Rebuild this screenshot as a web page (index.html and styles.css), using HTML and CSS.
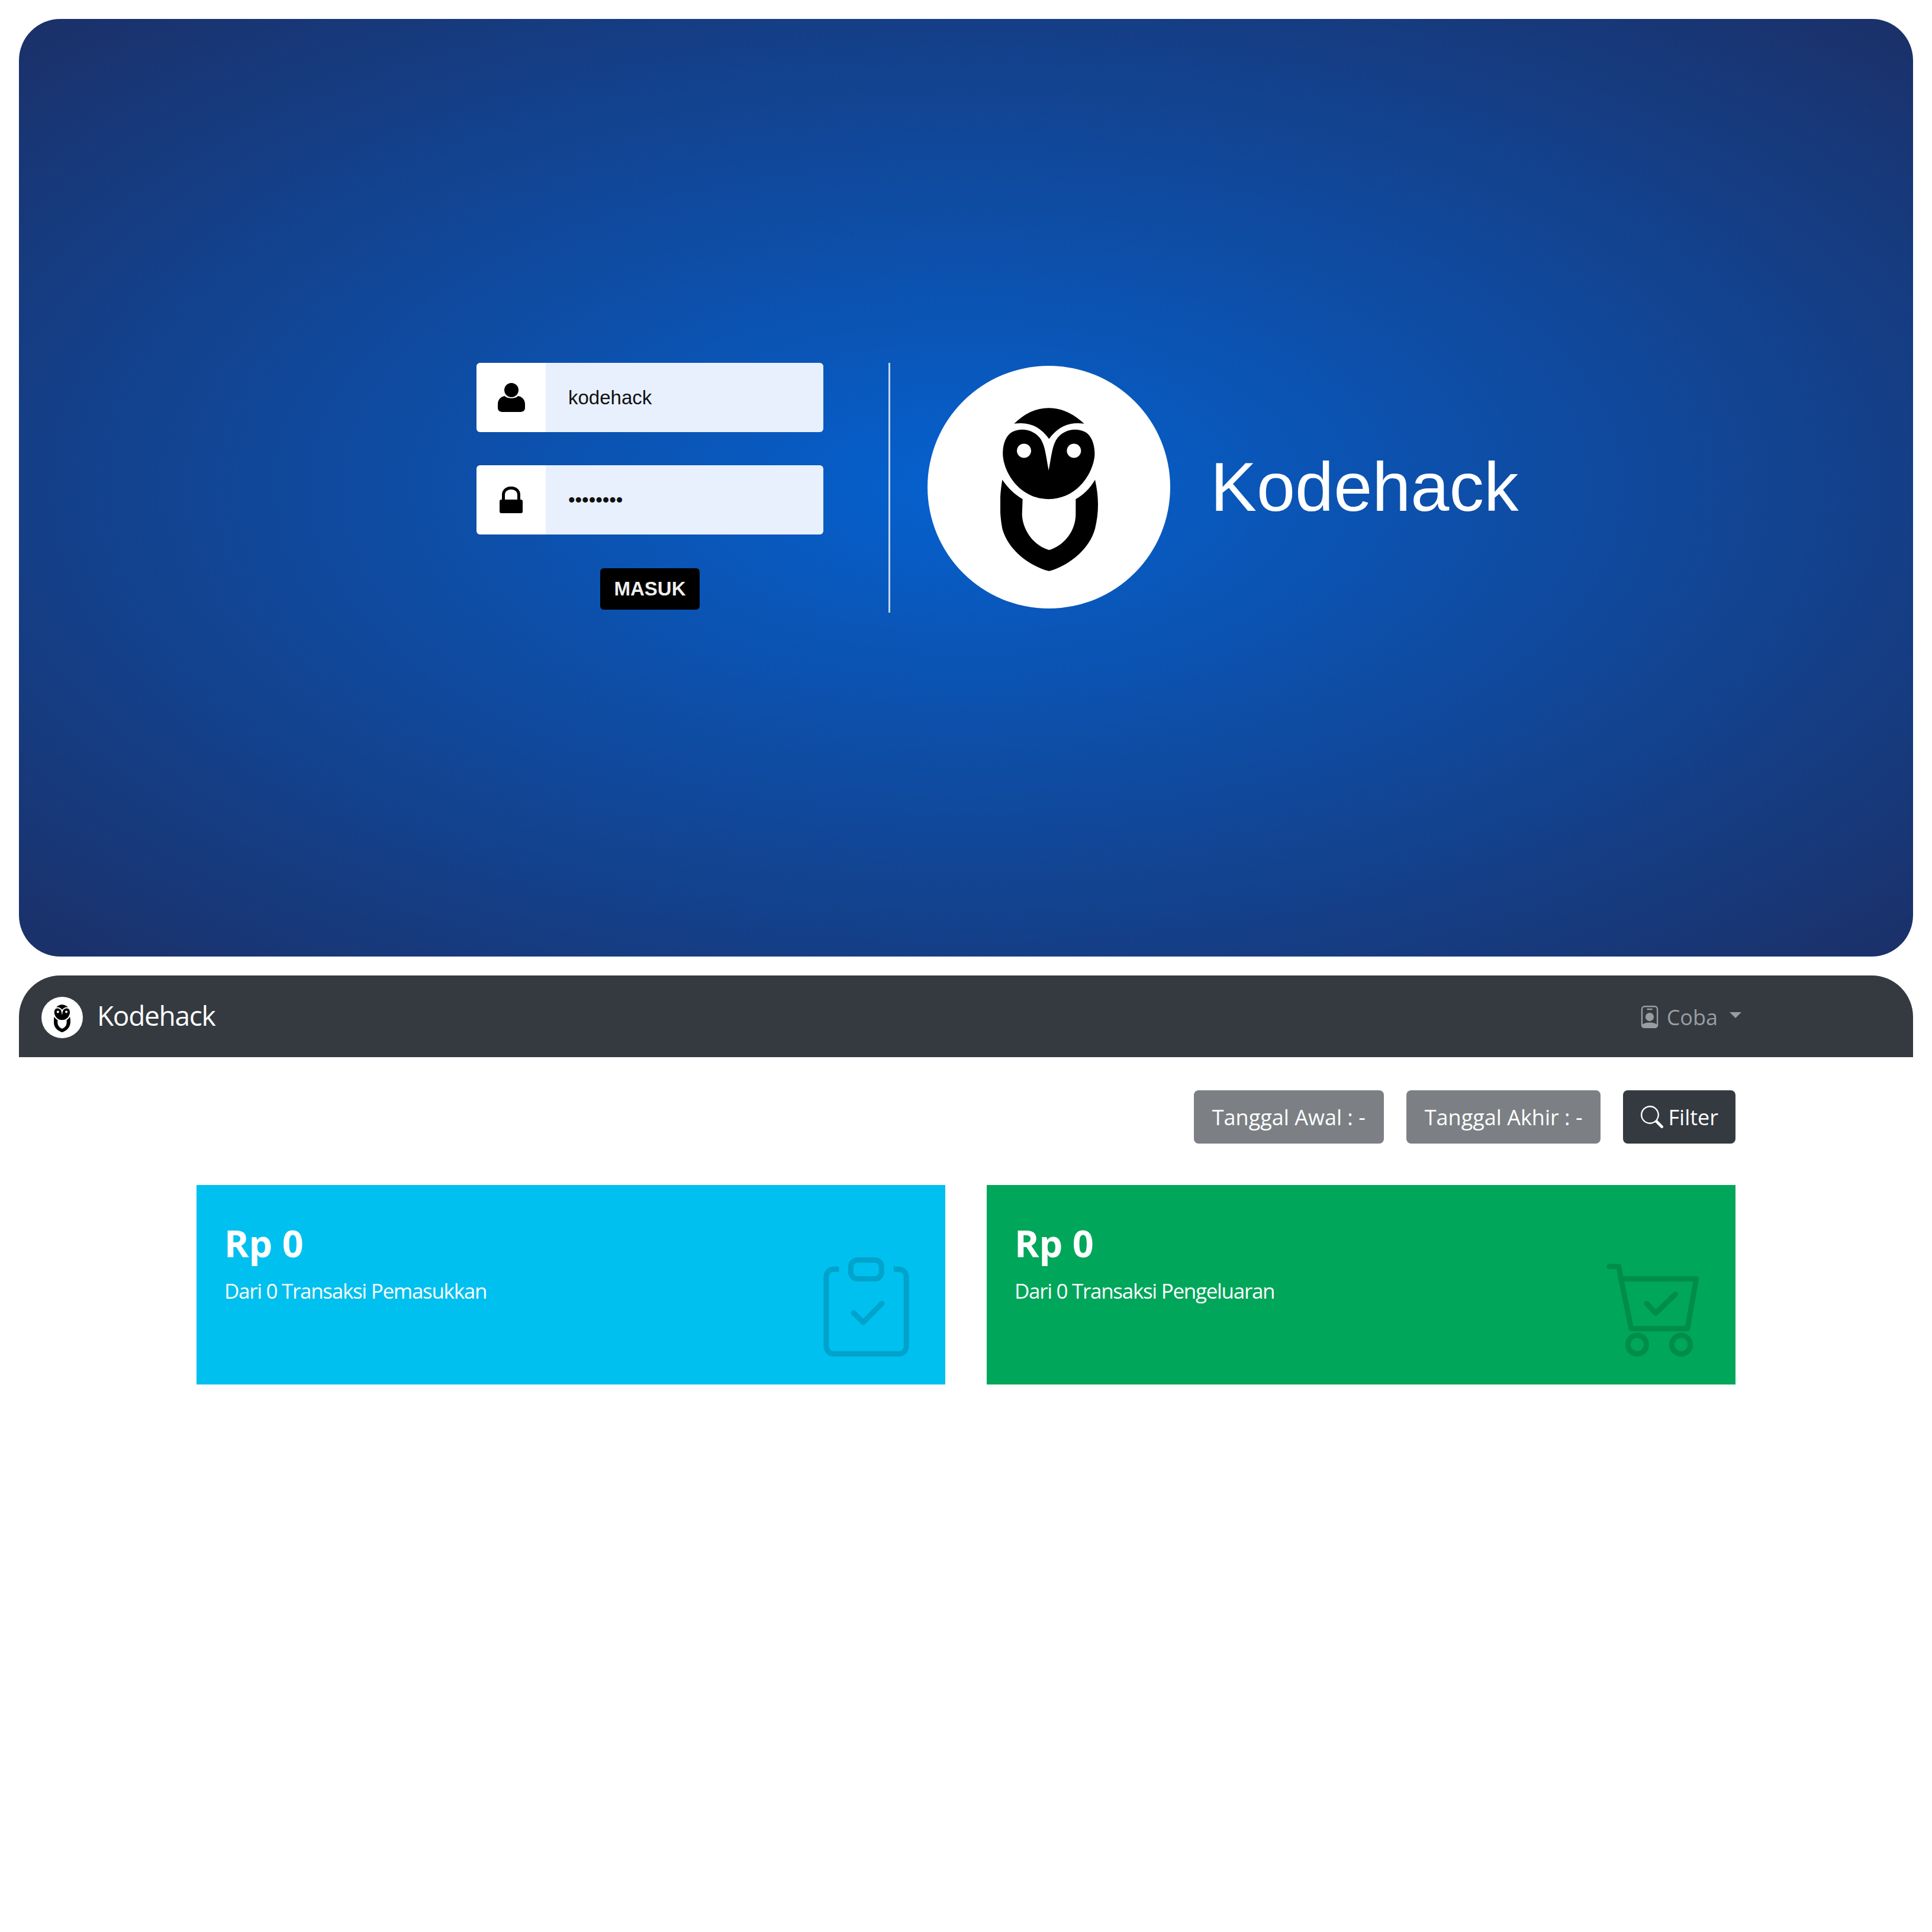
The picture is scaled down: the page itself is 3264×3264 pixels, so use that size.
FILE: index.html
```html
<!DOCTYPE html>
<html lang="en">
<head>
    <meta charset="utf-8" />
    <title>Kodehack</title>
    <link rel="stylesheet" href="styles.css">
</head>
<body>

<svg class="defs" width="0" height="0">
    <!-- Owl logo, used big on the login and small in the navbar -->
    <symbol id="owl" viewBox="90 85 495 830">
        <path d="M160 168 Q240 88 335 88 Q430 88 515 168 Q405 150 337 245 Q270 150 160 168 Z"/>
        <path fill-rule="evenodd" d="M335 405 C322 340 318 275 290 240 C258 200 200 185 150 210 C115 230 100 280 103 330 C110 420 190 550 335 550 C480 550 560 420 568 330 C570 280 555 230 520 210 C470 185 412 200 380 240 C352 275 348 340 335 405 Z M210 269 a36 36 0 1 0 .01 0 Z M463 269 a36 36 0 1 0 .01 0 Z"/>
        <path d="M100 452 C130 495 160 525 203 550 L200 630 C205 720 270 790 337 808 C405 790 470 720 472 630 L472 550 C510 530 545 495 570 452 C590 540 590 620 570 700 C540 810 430 890 337 915 C240 890 130 810 100 700 C85 620 85 540 100 452 Z"/>
    </symbol>
</svg>

<section class="login-panel">
    <form class="login-form">
        <div class="field">
            <span class="field-icon">
                <svg width="46" height="49" viewBox="0 0 46 49"><ellipse cx="23" cy="12" rx="12" ry="12"/><path d="M0 36 C0 27 6 23 12 22 C15 27 31 27 34 22 C40 23 46 27 46 36 V42 C46 47 42 49 38 49 H8 C4 49 0 47 0 42 Z"/></svg>
            </span>
            <input class="field-input" type="text" value="kodehack">
        </div>
        <div class="field">
            <span class="field-icon">
                <svg width="39" height="45" viewBox="0 0 39 45"><path d="M6.5 24 V14 C6.5 -1.5 32.5 -1.5 32.5 14 V24" fill="none" stroke="#000" stroke-width="5"/><rect y="22" width="39" height="23" rx="3"/></svg>
            </span>
            <input class="field-input" type="password" value="kodehack">
        </div>
        <button type="button" class="login-button">MASUK</button>
    </form>
    <div class="login-divider"></div>
    <div class="login-logo">
        <svg width="165" height="277"><use href="#owl"/></svg>
    </div>
    <h1 class="login-name">Kodehack</h1>
</section>

<nav class="navbar">
    <a class="brand">
        <span class="brand-logo"><svg width="28" height="47"><use href="#owl"/></svg></span>
        <span class="brand-name">Kodehack</span>
    </a>
    <a class="user-menu">
        <svg width="38" height="38" viewBox="0 0 16 16" fill="currentColor"><path d="M6.5 2a.5.5 0 0 0 0 1h3a.5.5 0 0 0 0-1h-3zM11 8a3 3 0 1 1-6 0 3 3 0 0 1 6 0z"/><path d="M4.5 0A2.5 2.5 0 0 0 2 2.5V14a2 2 0 0 0 2 2h8a2 2 0 0 0 2-2V2.5A2.5 2.5 0 0 0 11.5 0h-7zM3 2.5A1.5 1.5 0 0 1 4.5 1h7A1.5 1.5 0 0 1 13 2.5v10.795a4.2 4.2 0 0 0-.776-.492C11.392 12.387 10.063 12 8 12s-3.392.387-4.224.803a4.2 4.2 0 0 0-.776.492V2.5z"/></svg>
        <span>Coba</span>
        <i class="caret"></i>
    </a>
</nav>

<main class="content">
    <div class="filter-bar">
        <button type="button" class="btn btn-gray">Tanggal Awal : -</button>
        <button type="button" class="btn btn-gray">Tanggal Akhir : -</button>
        <button type="button" class="btn btn-dark">
            <svg width="38" height="38" viewBox="0 0 16 16" fill="currentColor"><path d="M11.742 10.344a6.5 6.5 0 1 0-1.397 1.398h-.001c.03.04.062.078.098.115l3.85 3.85a1 1 0 0 0 1.415-1.414l-3.85-3.85a1.007 1.007 0 0 0-.115-.1zM12 6.5a5.5 5.5 0 1 1-11 0 5.5 5.5 0 0 1 11 0z"/></svg>
            Filter
        </button>
    </div>

    <div class="cards">
        <div class="card card-blue">
            <div>
                <h3>Rp 0</h3>
                <p>Dari 0 Transaksi Pemasukkan</p>
            </div>
            <svg class="card-icon" width="145" height="168" viewBox="93 72 435 505" fill="none" stroke="currentColor" stroke-width="27" stroke-linecap="round" stroke-linejoin="round">
                <path d="M172 133 H150 Q107 133 107 178 V518 Q107 563 150 563 H470 Q514 563 514 518 V178 Q514 133 470 133 H450" stroke-linecap="butt"/>
                <rect x="232" y="86" width="156" height="96" rx="34"/>
                <path d="M246 354 L295 403 L390 307"/>
            </svg>
        </div>
        <div class="card card-green">
            <div>
                <h3>Rp 0</h3>
                <p>Dari 0 Transaksi Pengeluaran</p>
            </div>
            <svg class="card-icon" width="157" height="157" viewBox="75 75 470 472" fill="none" stroke="currentColor" stroke-width="27" stroke-linecap="round" stroke-linejoin="round">
                <path d="M88 89 H136 L148 152 H530 L485 405 H200 L148 152"/>
                <circle cx="230" cy="486" r="47"/>
                <circle cx="453" cy="486" r="47"/>
                <path d="M278 277 L324 326 L424 230"/>
            </svg>
        </div>
    </div>
</main>

</body>
</html>
```

FILE: styles.css
```css
* {
    box-sizing: border-box;
}

body {
    margin: 0;
    padding: 32px;
    background: #fff;
    font-family: "Open Sans", sans-serif;
}

.defs {
    position: absolute;
}

/* Login screen */
.login-panel {
    display: flex;
    align-items: flex-start;
    height: 1584px;
    padding: 581px 0 0 773px;
    border-radius: 70px;
    background: radial-gradient(ellipse at center, #0561cf 0%, #1b3068 100%);
    font-family: "Liberation Sans", Arial, sans-serif;
}

.login-form {
    display: flex;
    flex-direction: column;
    align-items: center;
    width: 586px;
}

.field {
    display: flex;
    width: 100%;
    height: 117px;
    margin-bottom: 56px;
    border-radius: 6px;
    overflow: hidden;
}

.field-icon {
    display: flex;
    align-items: center;
    justify-content: center;
    width: 117px;
    background: #fff;
}

.field-input {
    flex: 1;
    min-width: 0;
    padding: 0 0 0 38px;
    border: 0;
    background: #e8f0fe;
    color: #111;
    font-family: "Liberation Sans", Arial, sans-serif;
    font-size: 33px;
}

.login-button {
    width: 168px;
    height: 70px;
    margin-top: 1px;
    border: 0;
    border-radius: 6px;
    background: #000;
    color: #eee;
    font-family: "Liberation Sans", Arial, sans-serif;
    font-size: 33px;
    font-weight: bold;
}

.login-divider {
    width: 3px;
    height: 422px;
    margin: 0 63px 0 110px;
    background: #c5d7f0;
}

.login-logo {
    display: flex;
    align-items: center;
    justify-content: center;
    width: 410px;
    height: 410px;
    margin-top: 5px;
    padding-top: 7px;
    border-radius: 50%;
    background: #fff;
}

.login-name {
    margin: 142px 0 0 68px;
    color: #fff;
    font-size: 117px;
    font-weight: normal;
    line-height: 136px;
}

/* Navbar */
.navbar {
    display: flex;
    align-items: center;
    justify-content: space-between;
    height: 138px;
    margin-top: 32px;
    padding: 0 290px 0 38px;
    border-radius: 70px 70px 0 0;
    background: #343a40;
}

.brand {
    display: flex;
    align-items: center;
    color: #fff;
    font-size: 46px;
    letter-spacing: -1.3px;
}

.brand-name {
    margin-top: -4px;
}

.brand-logo {
    display: flex;
    align-items: center;
    justify-content: center;
    width: 70px;
    height: 70px;
    margin: 4px 24px 0 0;
    padding-top: 3px;
    border-radius: 50%;
    background: #fff;
}

.user-menu {
    display: flex;
    align-items: center;
    margin-top: 2px;
    color: #9a9da0;
    font-size: 36px;
}

.user-menu span {
    margin: 0 20px 0 10px;
}

.caret {
    width: 0;
    height: 0;
    margin-top: -6px;
    border-top: 10px solid currentColor;
    border-left: 10px solid transparent;
    border-right: 10px solid transparent;
}

/* Page content */
.content {
    padding: 56px 300px 0;
}

.filter-bar {
    display: flex;
    justify-content: flex-end;
    gap: 38px;
}

.btn {
    display: flex;
    align-items: center;
    height: 90px;
    padding: 0 30px;
    border: 0;
    border-radius: 8px;
    color: #fff;
    font-family: "Open Sans", sans-serif;
    font-size: 36px;
}

.btn svg {
    margin-right: 8px;
}

.btn-gray {
    background: #7c8084;
    padding: 0 31px;
}

.btn-dark {
    background: #343a40;
    padding: 0 29px 0 30px;
}

.cards {
    display: flex;
    gap: 70px;
    margin-top: 70px;
}

.card {
    flex: 1;
    display: flex;
    justify-content: space-between;
    height: 337px;
    padding: 62px 61px 47px 47px;
    color: #fff;
}

.card h3 {
    margin: 0;
    font-size: 63px;
    font-weight: bold;
    line-height: 72px;
}

.card p {
    margin: 20px 0 0;
    font-size: 35px;
    line-height: 50px;
    letter-spacing: -1.3px;
}

.card-icon {
    align-self: flex-end;
    color: rgba(0, 0, 0, 0.15);
}

.card-blue {
    background: #00c0ef;
}

.card-green {
    background: #00a65a;
}
```
